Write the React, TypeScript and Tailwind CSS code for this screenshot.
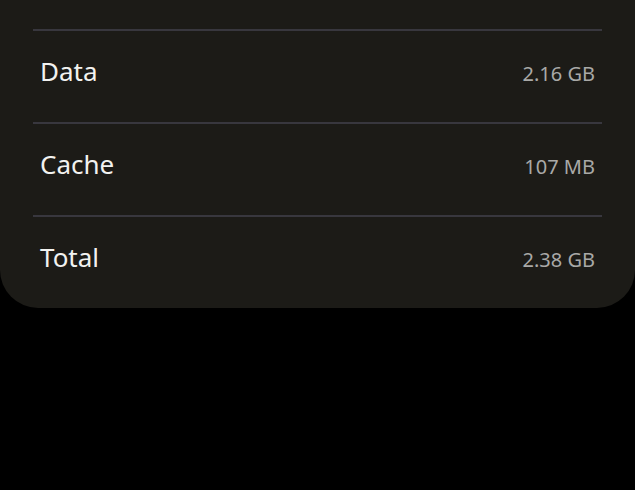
import React from 'react';

const rows = [
  { label: 'Data', value: '2.16 GB' },
  { label: 'Cache', value: '107 MB' },
  { label: 'Total', value: '2.38 GB' },
];

export default function App() {
  return (
    <div className="w-[635px] h-[490px] bg-black overflow-hidden" style={{ fontFamily: '"Noto Sans", "Open Sans", sans-serif' }}>
      <div className="bg-[#1c1b17] rounded-b-[38px] pt-[29px]">
        {rows.map((r) => (
          <div key={r.label} className="mx-[33px]">
            <div className="h-[2px] bg-[#38373e]" />
            <div className="h-[91px] flex items-center justify-between px-[7px] pb-[12px]">
              <span className="text-[26px] text-[#f2f2f0] leading-none">{r.label}</span>
              <span className="text-[20px] text-[#a9a9a7] leading-none mt-[6px]">{r.value}</span>
            </div>
          </div>
        ))}
      </div>
    </div>
  );
}
